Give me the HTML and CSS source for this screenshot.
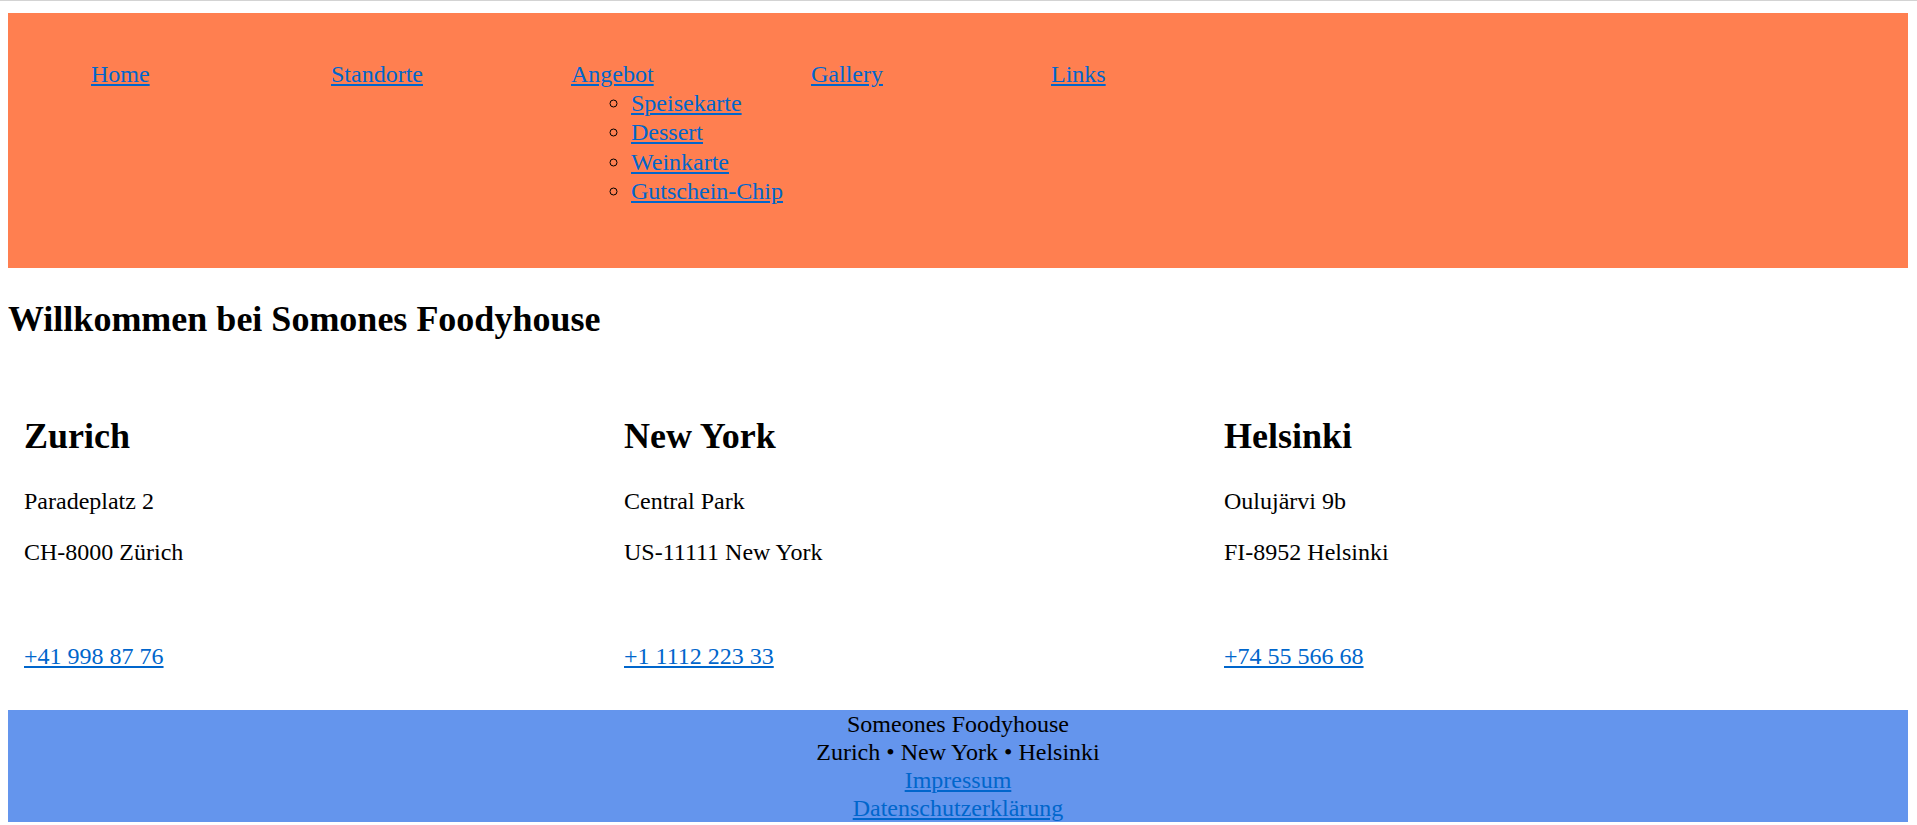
FILE: index.html
```html
<!DOCTYPE html>
<html lang="de">
<head>
<meta charset="utf-8">
<title>Someones Foodyhouse</title>
<link rel="stylesheet" href="styles.css">
</head>
<body>
<header class="site-header">
  <nav class="main-nav">
    <ul class="nav-list">
      <li class="nav-item"><a href="#">Home</a></li>
      <li class="nav-item"><a href="#">Standorte</a></li>
      <li class="nav-item"><a href="#">Angebot</a>
        <ul class="sub-list">
          <li><a href="#">Speisekarte</a></li>
          <li><a href="#">Dessert</a></li>
          <li><a href="#">Weinkarte</a></li>
          <li><a href="#">Gutschein-Chip</a></li>
        </ul>
      </li>
      <li class="nav-item"><a href="#">Gallery</a></li>
      <li class="nav-item"><a href="#">Links</a></li>
    </ul>
  </nav>
</header>
<main class="content">
  <h2 class="welcome">Willkommen bei Somones Foodyhouse</h2>
  <div class="locations">
    <section class="location">
      <h2 class="city">Zurich</h2>
      <p>Paradeplatz 2</p>
      <p>CH-8000 Zürich</p>
      <p>&nbsp;</p>
      <p><a href="#">+41 998 87 76</a></p>
    </section>
    <section class="location">
      <h2 class="city">New York</h2>
      <p>Central Park</p>
      <p>US-11111 New York</p>
      <p>&nbsp;</p>
      <p><a href="#">+1 1112 223 33</a></p>
    </section>
    <section class="location">
      <h2 class="city">Helsinki</h2>
      <p>Oulujärvi 9b</p>
      <p>FI-8952 Helsinki</p>
      <p>&nbsp;</p>
      <p><a href="#">+74 55 566 68</a></p>
    </section>
  </div>
</main>
<footer class="site-footer">
  <div class="footer-line">Someones Foodyhouse</div>
  <div class="footer-line">Zurich • New York • Helsinki</div>
  <div class="footer-line"><a href="#">Impressum</a></div>
  <div class="footer-line"><a href="#">Datenschutzerklärung</a></div>
</footer>
</body>
</html>
```

FILE: styles.css
```css
html {
  border-top: 1px solid #d3d3d3;
  background: #ffffff;
}

body {
  margin: 12px 9px 0 8px;
  font-family: "Liberation Serif", "Times New Roman", serif;
  font-size: 24px;
  line-height: 27.6px;
  color: #000000;
}

a {
  color: #0066cc;
  text-decoration: underline;
}

.site-header {
  background: #ff7f50;
  height: 255px;
  box-sizing: border-box;
  padding-top: 48px;
}

.nav-list {
  display: flex;
  margin: 0;
  padding: 0 0 0 83px;
  list-style: none;
}

.nav-item {
  width: 240px;
  flex: 0 0 240px;
}

.sub-list {
  margin: 0;
  padding-left: 60px;
  list-style: circle;
}

.sub-list li {
  line-height: 29.5px;
}

.welcome {
  font-size: 36px;
  line-height: 41.4px;
  margin: 31px 0 30px;
}

.locations {
  display: flex;
}

.location {
  width: 600px;
  box-sizing: border-box;
  padding: 16px;
}

.city {
  font-size: 36px;
  line-height: 41.4px;
  margin: 30px 0;
}

.location p {
  margin: 24px 0;
}

.site-footer {
  background: #6495ed;
  text-align: center;
}

.footer-line {
  line-height: 28px;
}
```
